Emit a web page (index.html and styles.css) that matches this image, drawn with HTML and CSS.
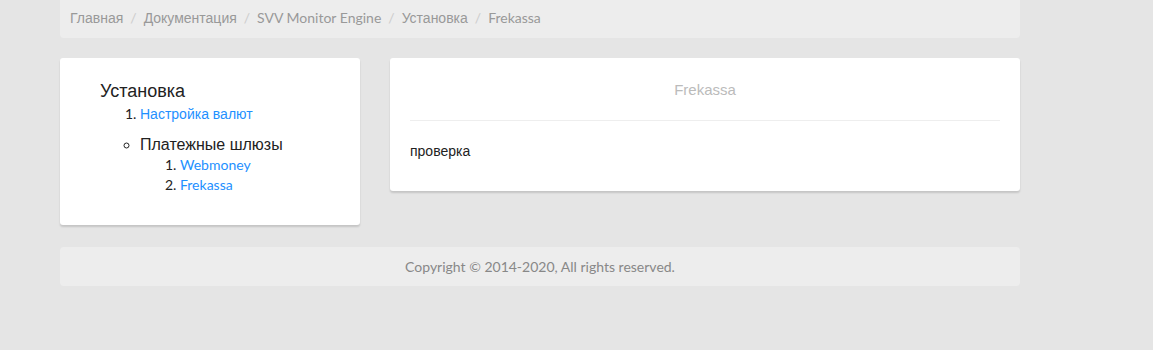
FILE: index.html
```html
<!DOCTYPE html>
<html lang="ru">
<head>
<meta charset="utf-8">
<title>Frekassa</title>
<link rel="stylesheet" href="styles.css">
</head>
<body>
<div class="page">
  <nav class="crumbs"><a class="cy" href="#">Главная</a><span class="sep">/</span><a class="cy" href="#">Документация</a><span class="sep">/</span><a href="#">SVV Monitor Engine</a><span class="sep">/</span><a class="cy" href="#">Установка</a><span class="sep">/</span><span class="current">Frekassa</span></nav>
  <div class="row">
    <aside class="card side">
      <ul class="toc">
        <li class="toc-head">Установка
          <ol class="num">
            <li><a class="cy" href="#">Настройка валют</a></li>
          </ol>
          <ul class="circ">
            <li>Платежные шлюзы
              <ol class="num">
                <li><a href="#">Webmoney</a></li>
                <li><a href="#">Frekassa</a></li>
              </ol>
            </li>
          </ul>
        </li>
      </ul>
    </aside>
    <main class="card content">
      <div class="content-title">Frekassa</div>
      <div class="content-body">проверка</div>
    </main>
  </div>
  <footer class="foot">Copyright © 2014-2020, All rights reserved.</footer>
</div>
</body>
</html>
```
FILE: styles.css
```css
html, body {
  margin: 0;
  padding: 0;
  background: #e5e5e5;
}
.page {
  width: 960px;
  margin-left: 60px;
}
.cy {
  font-family: "Liberation Sans", Arial, sans-serif;
}
.crumbs {
  background: #ededed;
  border-radius: 0 0 4px 4px;
  height: 38px;
  box-sizing: border-box;
  padding: 8px 10px 0;
  font-family: Lato, "Liberation Sans", sans-serif;
  font-size: 14px;
  line-height: 20px;
  color: #999;
}
.crumbs a {
  color: #999;
  text-decoration: none;
}
.crumbs .sep {
  color: #ccc;
  padding: 0 7px;
}
.crumbs .current {
  color: #999;
}
.row {
  display: flex;
  gap: 30px;
  align-items: flex-start;
  margin-top: 20px;
}
.card {
  background: #fff;
  border-radius: 3px;
  box-shadow: 0 2px 2px rgba(0,0,0,0.14);
}
.side {
  width: 300px;
  box-sizing: border-box;
  padding: 20px 20px 20px;
  flex: none;
}
.toc {
  list-style: none;
  margin: 0;
  padding-left: 20px;
  font-family: "Liberation Sans", Arial, sans-serif;
  color: #222;
}
.toc-head {
  font-size: 18px;
  line-height: 26px;
}
.num {
  margin: 0;
  padding-left: 40px;
  font-family: Lato, "Liberation Sans", sans-serif;
  font-size: 14px;
  line-height: 20px;
  color: #222;
}
.num a {
  color: #1e90ff;
  text-decoration: none;
}
.circ {
  list-style: circle;
  margin: 10px 0;
  padding-left: 40px;
  font-family: "Liberation Sans", Arial, sans-serif;
  font-size: 16px;
  line-height: 20px;
}
.circ > li {
  line-height: 21px;
}
.content {
  flex: 1;
  padding: 0 20px;
}
.content-title {
  padding: 20px 0 18px;
  line-height: 24px;
  text-align: center;
  font-family: "Liberation Sans", Arial, sans-serif;
  font-size: 15px;
  color: #bbb;
  border-bottom: 1px solid #eee;
}
.content-body {
  padding: 20px 0 30px;
  line-height: 20px;
  font-family: "Liberation Sans", Arial, sans-serif;
  font-size: 14px;
  color: #222;
}
.foot {
  margin-top: 22px;
  background: #ededed;
  border-radius: 4px;
  height: 39px;
  line-height: 39px;
  text-align: center;
  font-family: Lato, "Liberation Sans", sans-serif;
  font-size: 14px;
  color: #888;
}
```
